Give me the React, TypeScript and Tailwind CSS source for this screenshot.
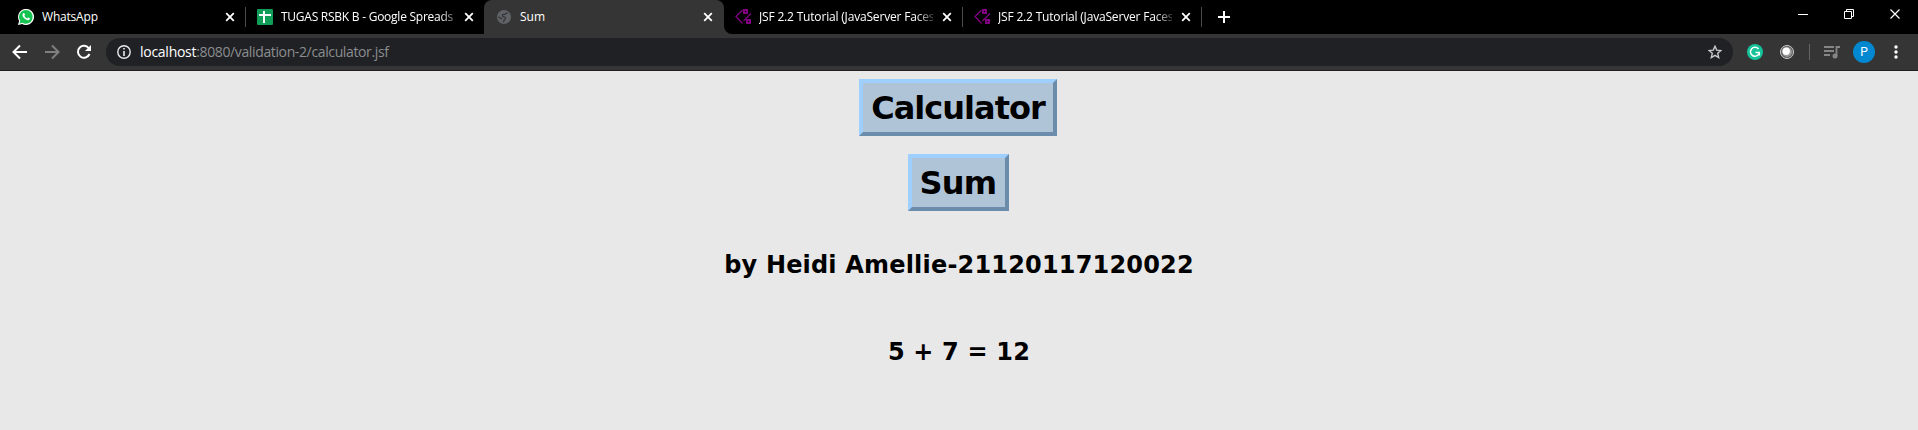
import React from "react";

function Close({ className = "" }: { className?: string }) {
  return (
    <svg width="10" height="10" viewBox="0 0 10 10" className={`shrink-0 ${className}`}>
      <path d="M1.2 1.2L8.8 8.8M8.8 1.2L1.2 8.8" stroke="#fff" strokeWidth="1.8" />
    </svg>
  );
}

function WhatsApp() {
  return (
    <svg width="16" height="16" viewBox="0 0 16 16" className="shrink-0">
      <path d="M0 16l1.1-4.1A8 8 0 1 1 4.100 14.900z" fill="#fff" />
      <path d="M1.500 14.500l.8-2.700A6.800 6.800 0 1 1 4.500 13.800z" fill="#16c350" />
      <path d="M5.400 4.100c.5-.4.9-.2 1.100.3l.5 1.200c.1.300-.5.900-.6 1.100.6 1.300 1.500 2.100 2.900 2.700.400-.4.700-1 1-.900l1.500.8c.300.2-.1 1.400-.7 1.700-1.700.8-3.800-.4-5.200-1.900-1.500-1.700-2.100-3.600-.5-5z" fill="#fff" />
    </svg>
  );
}

function Sheets() {
  return (
    <svg width="16" height="16" viewBox="0 0 16 16" className="shrink-0">
      <rect width="16" height="16" rx="1.200" fill="#0f9d58" />
      <path d="M2 5h12v2H8v7H6V7H2zM6 2h2v4H6z" fill="#fff" />
    </svg>
  );
}

function Globe() {
  return (
    <svg width="14" height="14" viewBox="0 0 14 14" className="shrink-0">
      <circle cx="7" cy="7" r="7" fill="#5f6368" />
      <path d="M10.800 3.200C9 2.500 8.600 4.600 6.500 4.400 4.800 4.600 5 6.800 6.800 6.900 9 7 9 8.800 7.600 9.600 6.500 10.200 7 11.500 6.300 12.200M1.500 6.800C3 8.500 4.500 8 5 9.300" fill="none" stroke="#353535" strokeWidth="1.300" />
    </svg>
  );
}

function Jsf() {
  return (
    <svg width="17" height="16" viewBox="0 0 17 16" className="shrink-0" fill="none" stroke="#800080">
      <path d="M7.500 1L1 7.500 7.500 14.500M16 4.500L8.500 12" strokeWidth="1.300" />
      <rect x="9" y="1" width="3" height="3" strokeWidth="2" />
      <rect x="12" y="11" width="3" height="3" strokeWidth="2" />
    </svg>
  );
}

function Title({ children, className }: { children: React.ReactNode; className: string }) {
  return (
    <span className={`whitespace-nowrap text-[12px] leading-[18px] text-white ${className}`}>{children}</span>
  );
}

const fade = "[mask-image:linear-gradient(to_right,black_90%,rgba(0,0,0,0.25))]";

function Tabs() {
  return (
    <div className="flex h-[34px] bg-black">
      <div className="flex w-[245px] items-center pl-[18px]">
        <WhatsApp />
        <Title className="ml-2 w-[176px] tracking-[-0.2px]">WhatsApp</Title>
        <Close className="ml-[7px]" />
      </div>
      <div className="flex w-[239px] items-center">
        <i className="h-5 w-px bg-[#4c4c4c]" />
        <span className="w-[11px]" />
        <Sheets />
        <Title className={`ml-2 w-[176px] tracking-[-0.25px] ${fade}`}>TUGAS RSBK B - Google Spreads</Title>
        <Close className="ml-[7px]" />
      </div>
      <div className="h-full w-[8px] bg-[#353535]"><div className="h-full rounded-br-[8px] bg-black" /></div>
      <div className="-ml-2 flex w-[240px] items-center rounded-t-[8px] bg-[#353535] pl-[13px]">
        <Globe />
        <Title className="ml-[9px] w-[176px]">Sum</Title>
        <Close className="ml-[7px]" />
      </div>
      <div className="h-full bg-[#353535]">
        <div className="flex h-full w-[238px] items-center rounded-bl-[8px] bg-black pl-[11px]">
          <Jsf />
          <Title className={`ml-[7px] w-[174px] tracking-[-0.18px] ${fade}`}>JSF 2.2 Tutorial (JavaServer Faces</Title>
          <Close className="ml-[9px]" />
        </div>
      </div>
      <div className="flex w-[239px] items-center">
        <i className="h-5 w-px bg-[#4c4c4c]" />
        <span className="w-[11px]" />
        <Jsf />
        <Title className={`ml-[7px] w-[174px] tracking-[-0.18px] ${fade}`}>JSF 2.2 Tutorial (JavaServer Faces</Title>
        <Close className="ml-[9px]" />
      </div>
      <div className="flex items-center">
        <i className="h-5 w-px bg-[#4c4c4c]" />
        <svg width="12" height="12" className="ml-[16px]"><path d="M6 0v12M0 6h12" stroke="#fff" strokeWidth="2" /></svg>
      </div>
      <svg width="103" height="12" className="ml-auto mr-[17px] mt-[8px]" fill="none" stroke="#fff">
        <path d="M0 6.500h10M92.500 1.500l9 9M101.500 1.500l-9 9" strokeWidth="1.200" />
        <path d="M46.500 3.500h7v7h-7zM48.500 3.500v-2h7v7h-2" />
      </svg>
    </div>
  );
}

function Toolbar() {
  return (
    <div className="flex h-[37px] items-center border-b border-[#231f20] bg-[#353535]">
      <svg width="80" height="16" viewBox="0 0 80 16" fill="none" strokeWidth="2" className="ml-[12px]">
        <path d="M15 8H2M8 1.500L1.500 8 8 14.500" stroke="#fff" />
        <path d="M33 8h13M40 1.500L46.500 8 40 14.500" stroke="#808080" />
        <path d="M77 4.500A6 6 0 1 0 77.500 10" stroke="#fff" /><path d="M79 1v6h-6z" fill="#fff" />
      </svg>
      <div className="ml-[14px] flex h-7 w-[1627px] items-center rounded-full bg-[#202124] pl-[11px] pr-[11px]">
        <svg width="14" height="14" fill="none" stroke="#e8eaed"><circle cx="7" cy="7" r="6.200" strokeWidth="1.400" /><path d="M7 6v5M7 3v1.600" strokeWidth="1.600" /></svg>
        <span className="ml-[9px] whitespace-nowrap text-[14px] leading-5 tracking-[-0.37px] text-[#8b8d90]"><span className="tracking-[-0.27px] text-white">localhost</span>:8080/validation-2/calculator.jsf</span>
        <svg width="14" height="14" viewBox="0 0 14 14" className="ml-auto" fill="none" stroke="#c8c9ca" strokeWidth="1.400"><path d="M7 1.200l1.700 3.900 4.300.4-3.300 2.800 1 4.300L7 10.400l-3.700 2.200 1-4.300L1 5.500l4.300-.4z" /></svg>
      </div>
      <svg width="16" height="16" viewBox="0 0 16 16" className="ml-[14px]"><circle cx="8" cy="8" r="8" fill="#15c39a" /><path d="M11.500 5A4.500 4.500 0 1 0 12.300 9M8.500 8.500h3.800v3" stroke="#fff" strokeWidth="1.500" fill="none" /></svg>
      <svg width="16" height="16" viewBox="0 0 16 16" className="ml-[16px]"><circle cx="8" cy="8" r="6.500" fill="#5c5c5c" stroke="#ccc" /><circle cx="8" cy="8" r="5" fill="#999" /><circle cx="7.200" cy="7.200" r="3.700" fill="#fff" /></svg>
      <i className="ml-[14px] h-4 w-px bg-[#656565]" />
      <svg width="16" height="13" viewBox="0 0 16 13" className="ml-[14px]" stroke="#858585" fill="none" strokeWidth="1.800"><path d="M0 1h10M0 5h10M0 9h6M12.500 10V1H16" /><circle cx="11" cy="10" r="2.500" fill="#858585" stroke="none" /></svg>
      <span className="ml-[13px] flex size-[22px] items-center justify-center rounded-full bg-[#0288d1] font-['Roboto',sans-serif] text-[12px] text-white">P</span>
      <svg width="4" height="14" className="ml-[19px]" fill="#fff"><circle cx="2" cy="2" r="1.700" /><circle cx="2" cy="7" r="1.700" /><circle cx="2" cy="12" r="1.700" /></svg>
    </div>
  );
}

const box = "flex h-[57px] -translate-x-px items-center justify-center border-4 border-t-[#9fcfff] border-l-[#9fcfff] border-b-[#6b8cab] border-r-[#6b8cab] bg-[#b0c4d8] pt-[2px] text-[32px] leading-[39px]";

export default function App() {
  return (
    <div className="flex h-[430px] w-[1918px] flex-col overflow-hidden bg-[#e8e8e8] font-['Open_Sans','Noto_Sans',sans-serif]">
      <Tabs />
      <Toolbar />
      <main className="flex flex-col items-center whitespace-nowrap pt-[8px] font-['DejaVu_Sans',sans-serif] font-bold text-black">
        <h1 className={`w-[198px] ${box}`}><span className="tracking-[-1px]">Calculator</span></h1>
        <h1 className={`mt-[18px] w-[101px] ${box}`}><span className="tracking-[-0.8px]">Sum</span></h1>
        <h2 className="mt-[40px] text-[24px] leading-[29px] tracking-[0.18px]">by Heidi Amellie-21120117120022</h2>
        <h2 className="mt-[58px] text-[24px] leading-[29px] tracking-[0.18px]">5 + 7 = 12</h2>
      </main>
    </div>
  );
}
